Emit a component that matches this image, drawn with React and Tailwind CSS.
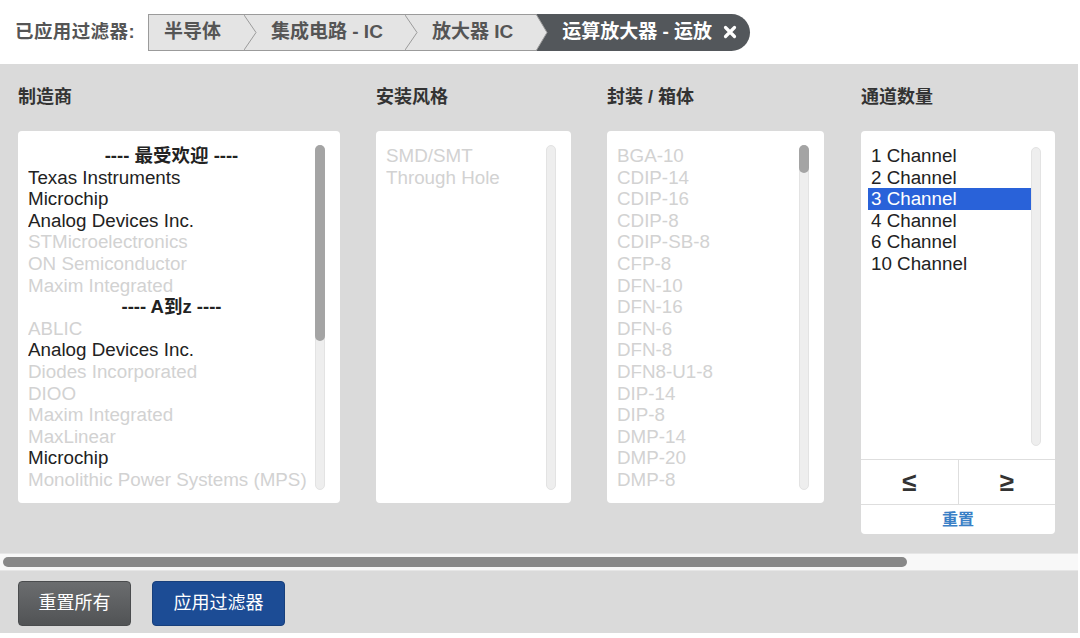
import { useState } from "react";

const FONT = { fontFamily: '"Liberation Sans", "Noto Sans CJK SC", sans-serif' };

const manufacturers = [
    { label: "---- 最受欢迎 ----", head: true },
    { label: "Texas Instruments", on: true },
    { label: "Microchip", on: true },
    { label: "Analog Devices Inc.", on: true },
    { label: "STMicroelectronics" },
    { label: "ON Semiconductor" },
    { label: "Maxim Integrated" },
    { label: "---- A到z ----", head: true },
    { label: "ABLIC" },
    { label: "Analog Devices Inc.", on: true },
    { label: "Diodes Incorporated" },
    { label: "DIOO" },
    { label: "Maxim Integrated" },
    { label: "MaxLinear" },
    { label: "Microchip", on: true },
    { label: "Monolithic Power Systems (MPS)" },
];

const mounting = [{ label: "SMD/SMT" }, { label: "Through Hole" }];

const packages = [
    "BGA-10", "CDIP-14", "CDIP-16", "CDIP-8", "CDIP-SB-8", "CFP-8", "DFN-10", "DFN-16",
    "DFN-6", "DFN-8", "DFN8-U1-8", "DIP-14", "DIP-8", "DMP-14", "DMP-20", "DMP-8",
].map((label) => ({ label }));

const channels = ["1 Channel", "2 Channel", "3 Channel", "4 Channel", "6 Channel", "10 Channel"];

// fake scrollbar on the right of each list
function ScrollTrack({ thumb, className }) {
    return (
        <div className={`w-[10px] rounded-full bg-[#eeeeee] border border-[#e3e3e3] relative ${className}`}>
            {thumb > 0 && (
                <div
                    className="absolute left-[-1px] right-[-1px] top-[-1px] rounded-full bg-[#a4a4a4]"
                    style={{ height: thumb }}
                ></div>
            )}
        </div>
    );
}

function ListBox({ items, width, thumb }) {
    return (
        <div className={`bg-white rounded-[4px] h-[372px] flex pl-[10px] pr-[15px] ${width}`}>
            <div className="flex-1 min-w-0 overflow-hidden pt-[14px] h-[359px] text-[18.8px] leading-[21.6px]">
                {items.map((item, i) => (
                    <div
                        key={i}
                        className={`whitespace-nowrap ${item.head ? "text-center font-bold text-[18.5px] text-[#222]" : item.on ? "text-[#222]" : "text-[#d2d2d2]"}`}
                    >
                        {item.label}
                    </div>
                ))}
            </div>
            <ScrollTrack thumb={thumb} className="mt-[14px] mb-[13px]" />
        </div>
    );
}

function Chevron() {
    return (
        <svg width="13" height="35" viewBox="0 0 13 35" className="shrink-0">
            <polyline points="0,0 12,17.5 0,35" fill="none" stroke="#9b9b9b" strokeWidth="1" />
        </svg>
    );
}

export default function App() {
    const [selected, setSelected] = useState("3 Channel");

    return (
        <div style={FONT} className="w-[1080px] h-[638px] bg-white overflow-hidden">
            {/* applied filters */}
            <div className="h-[64px] flex items-center pl-[15px]">
                <span className="text-[18.5px] text-[#555] font-semibold tracking-[0.4px]">已应用过滤器:</span>
                <div className="ml-[13px] flex h-[37px] text-[19px] font-semibold">
                    <div className="flex items-center bg-[#e4e4e4] border border-r-0 border-[#9b9b9b] text-[#555]">
                        <span className="pl-[15px] pr-[23px]">半导体</span>
                        <Chevron />
                        <span className="pl-[14px] pr-[22px]">集成电路 - IC</span>
                        <Chevron />
                        <span className="pl-[14px] pr-[23px]">放大器 IC</span>
                    </div>
                    <div className="flex items-center bg-[#53575b] rounded-r-full text-white">
                        <svg width="12" height="37" viewBox="0 0 12 37" className="shrink-0">
                            <polygon points="0,0 11,18.5 0,37" fill="#e4e4e4" />
                            <polyline points="0,0 11,18.5 0,37" fill="none" stroke="#9b9b9b" strokeWidth="1" />
                        </svg>
                        <span className="pl-[14px]">运算放大器 - 运放</span>
                        <svg width="14" height="14" viewBox="0 0 14 14" className="ml-[11px] mr-[13px]">
                            <path d="M2.5 2.5 L11.5 11.5 M11.5 2.5 L2.5 11.5" stroke="white" strokeWidth="3.2" strokeLinecap="round" />
                        </svg>
                    </div>
                </div>
            </div>

            {/* filter panel */}
            <div className="w-[1078px] h-[569px] bg-[#dadada] flex flex-col">
                <div className="flex items-start gap-[36px] pl-[18px] pt-[22px]">
                    <div>
                        <h3 className="text-[18px] font-bold text-[#333] leading-[22px] mb-[23px]">制造商</h3>
                        <ListBox items={manufacturers} width="w-[322px]" thumb={196} />
                    </div>
                    <div>
                        <h3 className="text-[18px] font-bold text-[#333] leading-[22px] mb-[23px]">安装风格</h3>
                        <ListBox items={mounting} width="w-[195px]" thumb={0} />
                    </div>
                    <div>
                        <h3 className="text-[18px] font-bold text-[#333] leading-[22px] mb-[23px]">封装 / 箱体</h3>
                        <ListBox items={packages} width="w-[217px]" thumb={28} />
                    </div>
                    <div className="ml-[1px]">
                        <h3 className="text-[18px] font-bold text-[#333] leading-[22px] mb-[23px]">通道数量</h3>
                        <div className="w-[194px] h-[403px] bg-white rounded-[4px] flex flex-col">
                            <div className="h-[329px] flex pl-[7px] pr-[14px] border-b border-[#dedede]">
                                <div className="flex-1 pt-[14px] text-[18.8px] leading-[21.6px] text-[#222]">
                                    {channels.map((c) => (
                                        <div
                                            key={c}
                                            onClick={() => setSelected(c)}
                                            className={`pl-[3px] cursor-pointer ${selected === c ? "bg-[#2962d9] text-white" : ""}`}
                                        >
                                            {c}
                                        </div>
                                    ))}
                                </div>
                                <ScrollTrack thumb={0} className="mt-[16px] mb-[13px]" />
                            </div>
                            <div className="h-[45px] flex border-b border-[#dedede] text-[26px] font-bold text-[#333]">
                                <button className="flex-1 flex items-center justify-center border-r border-[#dedede]">≤</button>
                                <button className="flex-1 flex items-center justify-center">≥</button>
                            </div>
                            <button className="flex-1 text-[16px] text-[#3a7fc6] font-semibold">重置</button>
                        </div>
                    </div>
                </div>

                {/* horizontal scrollbar */}
                <div className="mt-[19px] h-[18px] bg-[#f8f8f8] border-y border-[#e6e6e6] flex items-center px-[3px]">
                    <div className="w-[904px] h-[10px] rounded-full bg-[#888888]"></div>
                </div>

                <div className="flex gap-[21px] pl-[18px] pt-[10px]">
                    <button className="w-[113px] h-[45px] rounded-[4px] border border-[#4a4c4e] bg-gradient-to-b from-[#6b6d6f] to-[#515355] text-white text-[18px]">
                        重置所有
                    </button>
                    <button className="w-[133px] h-[45px] rounded-[4px] border border-[#173f7c] bg-[#1c4c95] text-white text-[18px]">
                        应用过滤器
                    </button>
                </div>
            </div>
        </div>
    );
}
